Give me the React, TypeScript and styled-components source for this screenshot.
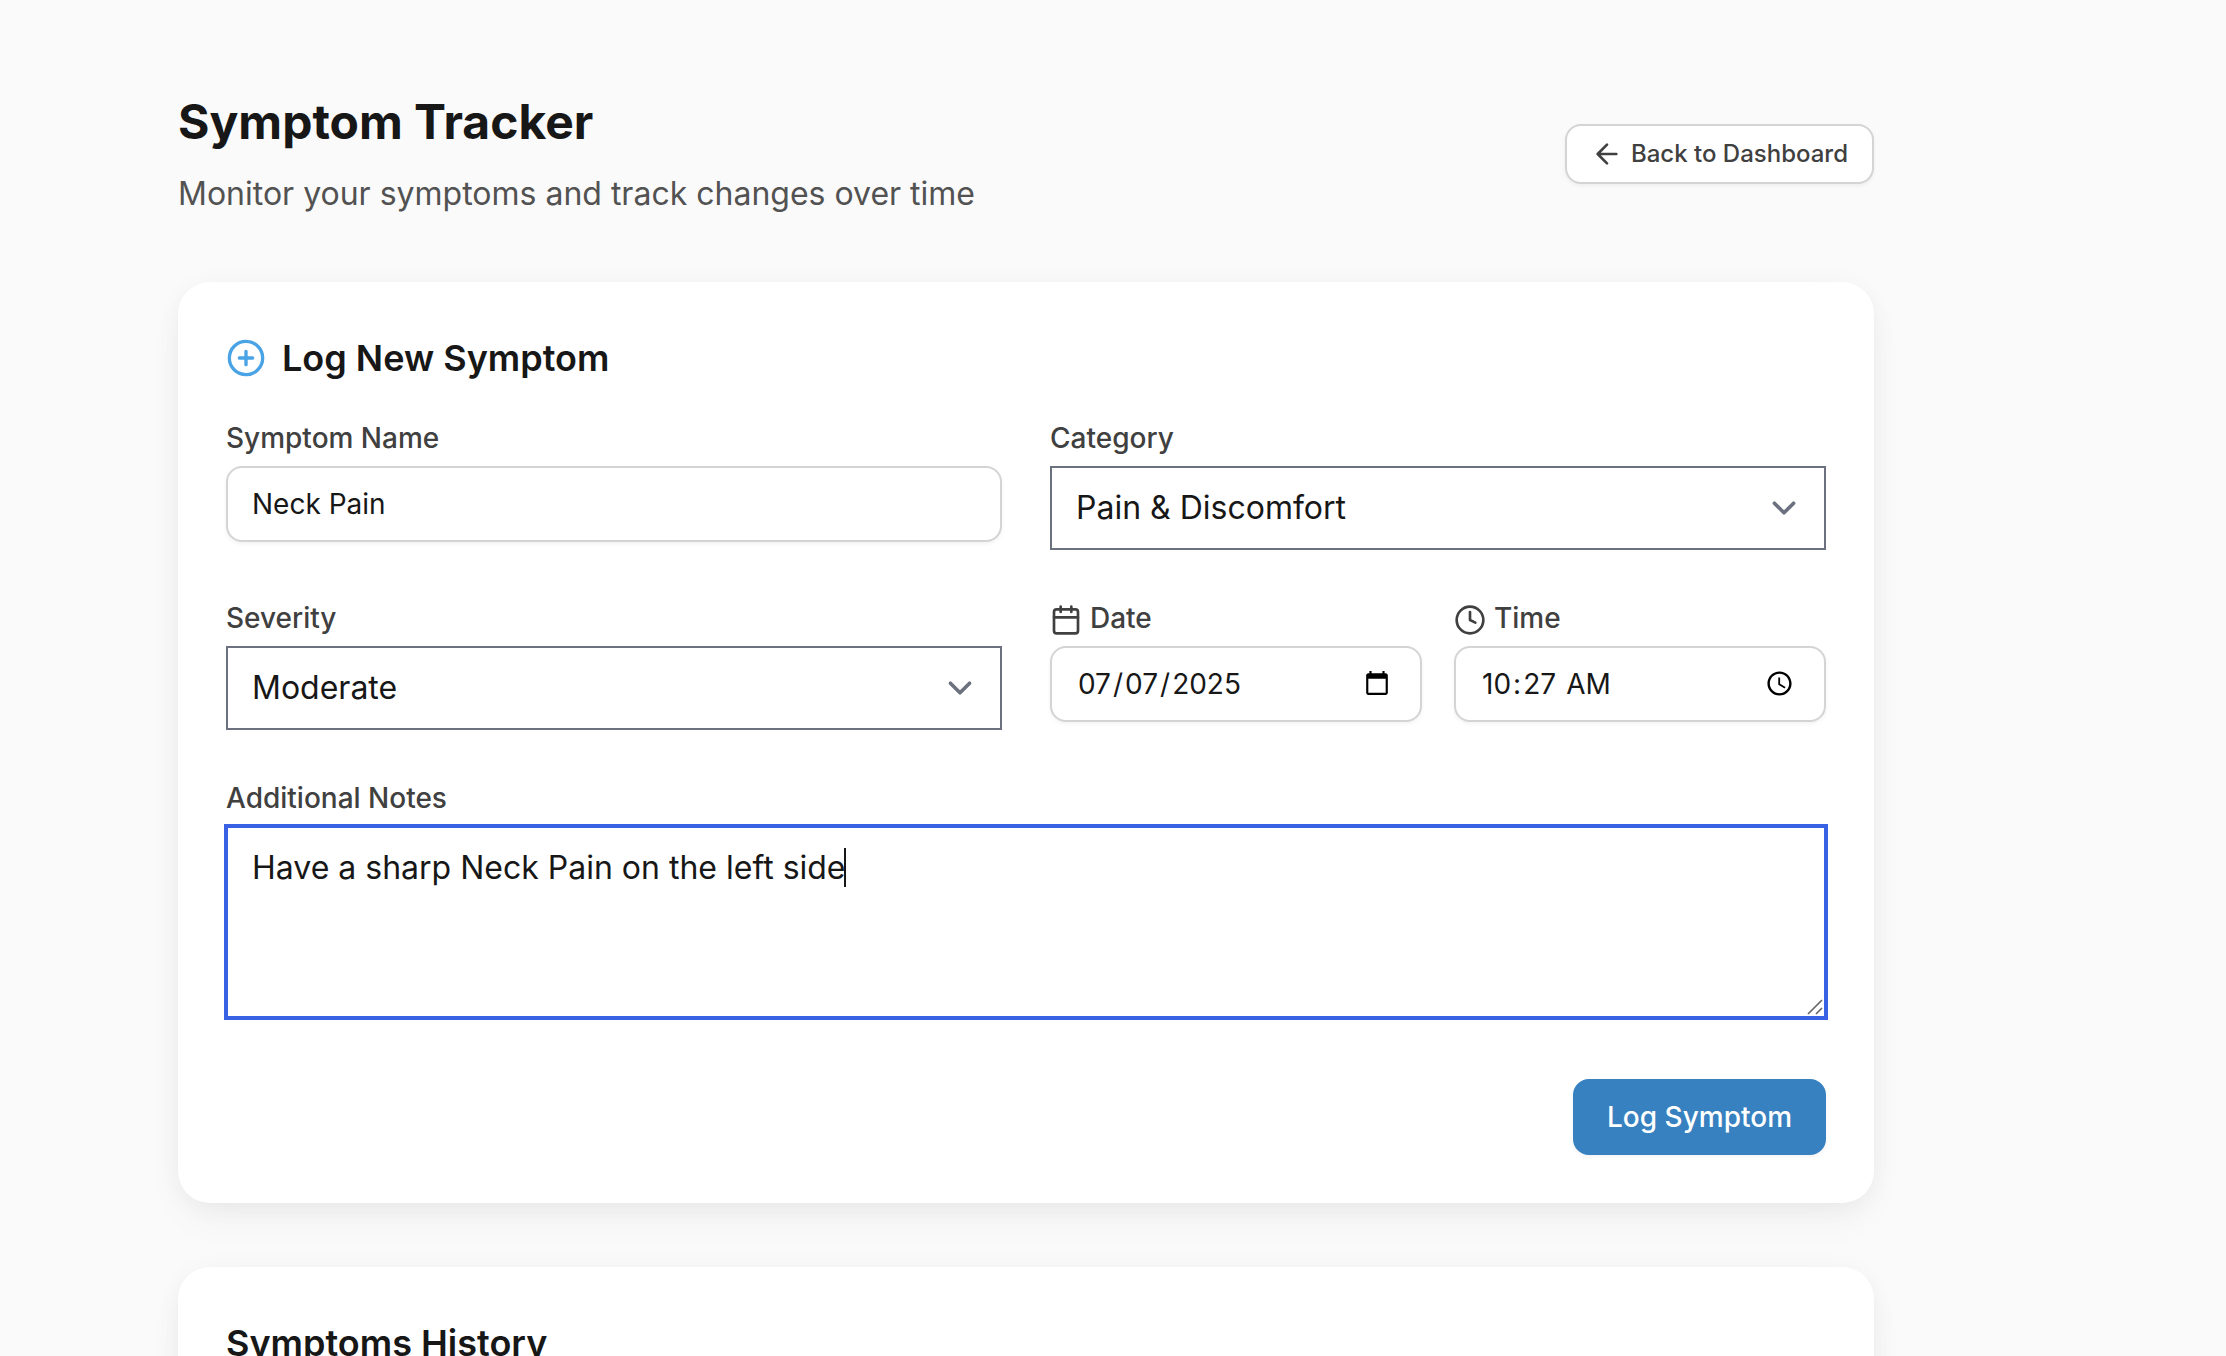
import React, { useLayoutEffect, useRef, useState } from "react";
import styled, { createGlobalStyle, css } from "styled-components";

const FONT = `Inter, "Liberation Sans", sans-serif`;

const color = {
  page: "#fafafa",
  surface: "#ffffff",
  heading: "#171717",
  label: "#404040",
  muted: "#525252",
  border: "#d4d4d4",
  control: "#6c7180",
  accent: "#4aa3e5",
  primary: "#3881c0",
  focus: "#3862e3",
};

const CARET_WIDTH = 2;

const GlobalStyle = createGlobalStyle`
  *, *::before, *::after { box-sizing: border-box; }
  body {
    margin: 0;
    background: ${color.page};
    color: ${color.heading};
    font-family: ${FONT};
    -webkit-font-smoothing: antialiased;
  }
  h1, h2, p { margin: 0; }
  button, input, select, textarea { font-family: inherit; margin: 0; }
`;

const Page = styled.div`
  height: 100vh;
  overflow-y: auto;
  scrollbar-width: none;
  padding: 90px 178px 0;
`;

const Main = styled.main`
  display: flex;
  flex-direction: column;
  gap: 64px;
  max-width: 1696px;
  padding-bottom: 64px;
`;

const Header = styled.header`
  display: flex;
  align-items: center;
  justify-content: space-between;
  gap: 32px;
`;

const Title = styled.h1`
  font-size: 48px;
  line-height: 64px;
  font-weight: 700;
`;

const Subtitle = styled.p`
  margin-top: 16px;
  font-size: 32px;
  line-height: 48px;
  color: ${color.muted};
`;

const softShadow = css`
  box-shadow: 0 2px 4px rgba(0, 0, 0, 0.05);
`;

const BackButton = styled.button`
  display: inline-flex;
  align-items: center;
  gap: 8px;
  padding: 12px 24px;
  border: 2px solid ${color.border};
  border-radius: 16px;
  background: ${color.surface};
  color: ${color.label};
  font-size: 24px;
  line-height: 32px;
  font-weight: 500;
  white-space: nowrap;
  ${softShadow}
`;

const Card = styled.section`
  padding: 48px;
  border-radius: 32px;
  background: ${color.surface};
  box-shadow: 0 4px 30px -6px rgba(0, 0, 0, 0.07),
    0 20px 40px -4px rgba(0, 0, 0, 0.04);
`;

const CardTitle = styled.h2`
  display: flex;
  align-items: center;
  gap: 16px;
  margin-bottom: 32px;
  font-size: 36px;
  line-height: 56px;
  font-weight: 600;

  svg { color: ${color.accent}; }
`;

const Form = styled.form`
  display: flex;
  flex-direction: column;
  gap: 48px;
`;

const Grid = styled.div<{ $gap: number }>`
  display: grid;
  grid-template-columns: repeat(2, minmax(0, 1fr));
  align-items: start;
  gap: ${(p) => p.$gap}px;
`;

const Field = styled.div`
  min-width: 0;
`;

const Label = styled.label`
  display: block;
  height: 40px;
  margin-bottom: 8px;
  font-size: 28px;
  line-height: 40px;
  font-weight: 500;
  color: ${color.label};

  svg {
    vertical-align: middle;
    margin-right: 8px;
  }
`;

const Input = styled.input`
  display: block;
  width: 100%;
  height: 76px;
  padding: 16px 24px;
  border: 2px solid ${color.border};
  border-radius: 16px;
  background: ${color.surface};
  color: ${color.heading};
  font-size: 28px;
  line-height: 40px;
  outline: none;
  ${softShadow}

  &::-webkit-datetime-edit-fields-wrapper { padding: 0; }
  &::-webkit-datetime-edit-month-field,
  &::-webkit-datetime-edit-day-field,
  &::-webkit-datetime-edit-year-field,
  &::-webkit-datetime-edit-hour-field,
  &::-webkit-datetime-edit-minute-field { padding: 0 2px; }
  &::-webkit-datetime-edit-ampm-field { padding: 0 3px; }
  &::-webkit-calendar-picker-indicator { margin-inline-end: 3px; }
`;

const chevron = encodeURIComponent(
  `<svg xmlns="http://www.w3.org/2000/svg" fill="none" viewBox="0 0 20 20"><path stroke="${color.control}" stroke-linecap="round" stroke-linejoin="round" stroke-width="1.5" d="M6 8l4 4 4-4"/></svg>`
);

const Select = styled.select`
  display: block;
  width: 100%;
  appearance: none;
  padding: 16px 80px 16px 24px;
  border: 2px solid ${color.control};
  border-radius: 0;
  background: ${color.surface} url("data:image/svg+xml,${chevron}") no-repeat
    right 16px center / 48px 48px;
  color: ${color.heading};
  font-size: 32px;
  line-height: 48px;
  outline: none;
`;

const NotesBox = styled.div`
  position: relative;
`;

const Textarea = styled.textarea`
  display: block;
  width: 100%;
  height: 192px;
  padding: 16px 24px;
  border: 2px solid ${color.focus};
  box-shadow: 0 0 0 2px ${color.focus};
  background: ${color.surface};
  color: ${color.heading};
  caret-color: transparent;
  font-size: 32px;
  line-height: 48px;
  outline: none;
  resize: vertical;

  &::-webkit-resizer { display: none; }
`;

const Caret = styled.span`
  position: absolute;
  top: 22px;
  width: ${CARET_WIDTH}px;
  height: 39px;
  background: ${color.heading};
  pointer-events: none;
`;

const Grip = styled.svg`
  position: absolute;
  right: 2px;
  bottom: 2px;
  width: 18px;
  height: 18px;
  pointer-events: none;
`;

const Actions = styled.div`
  display: flex;
  justify-content: flex-end;
  padding-top: 13px;
`;

const Submit = styled.button`
  padding: 16px 32px;
  border: 2px solid ${color.primary};
  border-radius: 16px;
  background: ${color.primary};
  color: #ffffff;
  font-size: 28px;
  line-height: 40px;
  font-weight: 500;
  ${softShadow}
`;

const Icon = ({ size, children }: { size: number; children: React.ReactNode }) => (
  <svg
    width={size}
    height={size}
    viewBox="0 0 24 24"
    fill="none"
    stroke="currentColor"
    strokeWidth="2"
    strokeLinecap="round"
    strokeLinejoin="round"
    aria-hidden="true"
  >
    {children}
  </svg>
);

function Notes() {
  const ref = useRef<HTMLTextAreaElement>(null);
  const [text, setText] = useState("Have a sharp Neck Pain on the left side");
  const [caretX, setCaretX] = useState(0);

  useLayoutEffect(() => {
    const el = ref.current;
    const ctx = document.createElement("canvas").getContext("2d");
    if (!el || !ctx) return;
    const style = getComputedStyle(el);
    ctx.font = `${style.fontWeight} ${style.fontSize} ${style.fontFamily}`;
    const start = parseInt(style.paddingLeft, 10) + parseInt(style.borderLeftWidth, 10);
    const end = start + ctx.measureText(text).width;
    setCaretX(Math.floor(end - CARET_WIDTH / 2));
  }, [text]);

  return (
    <NotesBox>
      <Textarea
        id="notes"
        ref={ref}
        value={text}
        onChange={(e) => setText(e.target.value)}
      />
      <Caret style={{ left: caretX }} />
      <Grip viewBox="0 0 18 18" stroke="#666666" strokeWidth="1.6" aria-hidden="true">
        <path d="M2 16L16 2M10 16L16 10" />
      </Grip>
    </NotesBox>
  );
}

export default function App() {
  return (
    <Page>
      <GlobalStyle />
      <Main>
        <Header>
          <div>
            <Title>Symptom Tracker</Title>
            <Subtitle>Monitor your symptoms and track changes over time</Subtitle>
          </div>
          <BackButton type="button">
            <Icon size={32}>
              <path d="M19 12H5M12 19l-7-7 7-7" />
            </Icon>
            Back to Dashboard
          </BackButton>
        </Header>

        <Card>
          <CardTitle>
            <Icon size={40}>
              <circle cx="12" cy="12" r="10" />
              <path d="M12 8v8M8 12h8" />
            </Icon>
            Log New Symptom
          </CardTitle>
          <Form onSubmit={(e) => e.preventDefault()}>
            <Grid $gap={48}>
              <Field>
                <Label htmlFor="name">Symptom Name</Label>
                <Input id="name" type="text" defaultValue="Neck Pain" />
              </Field>
              <Field>
                <Label htmlFor="category">Category</Label>
                <Select id="category" defaultValue="pain">
                  <option value="pain">Pain &amp; Discomfort</option>
                </Select>
              </Field>
              <Field>
                <Label htmlFor="severity">Severity</Label>
                <Select id="severity" defaultValue="moderate">
                  <option value="moderate">Moderate</option>
                </Select>
              </Field>
              <Grid $gap={32}>
                <Field>
                  <Label htmlFor="date">
                    <Icon size={32}>
                      <rect x="3" y="4" width="18" height="18" rx="2" />
                      <path d="M16 2v4M8 2v4M3 10h18" />
                    </Icon>
                    Date
                  </Label>
                  <Input id="date" type="date" defaultValue="2025-07-07" />
                </Field>
                <Field>
                  <Label htmlFor="time">
                    <Icon size={32}>
                      <circle cx="12" cy="12" r="10" />
                      <path d="M12 6v6l4 2" />
                    </Icon>
                    Time
                  </Label>
                  <Input id="time" type="time" defaultValue="10:27" />
                </Field>
              </Grid>
            </Grid>
            <Field>
              <Label htmlFor="notes">Additional Notes</Label>
              <Notes />
            </Field>
            <Actions>
              <Submit type="submit">Log Symptom</Submit>
            </Actions>
          </Form>
        </Card>

        <Card>
          <CardTitle>Symptoms History</CardTitle>
        </Card>
      </Main>
    </Page>
  );
}
